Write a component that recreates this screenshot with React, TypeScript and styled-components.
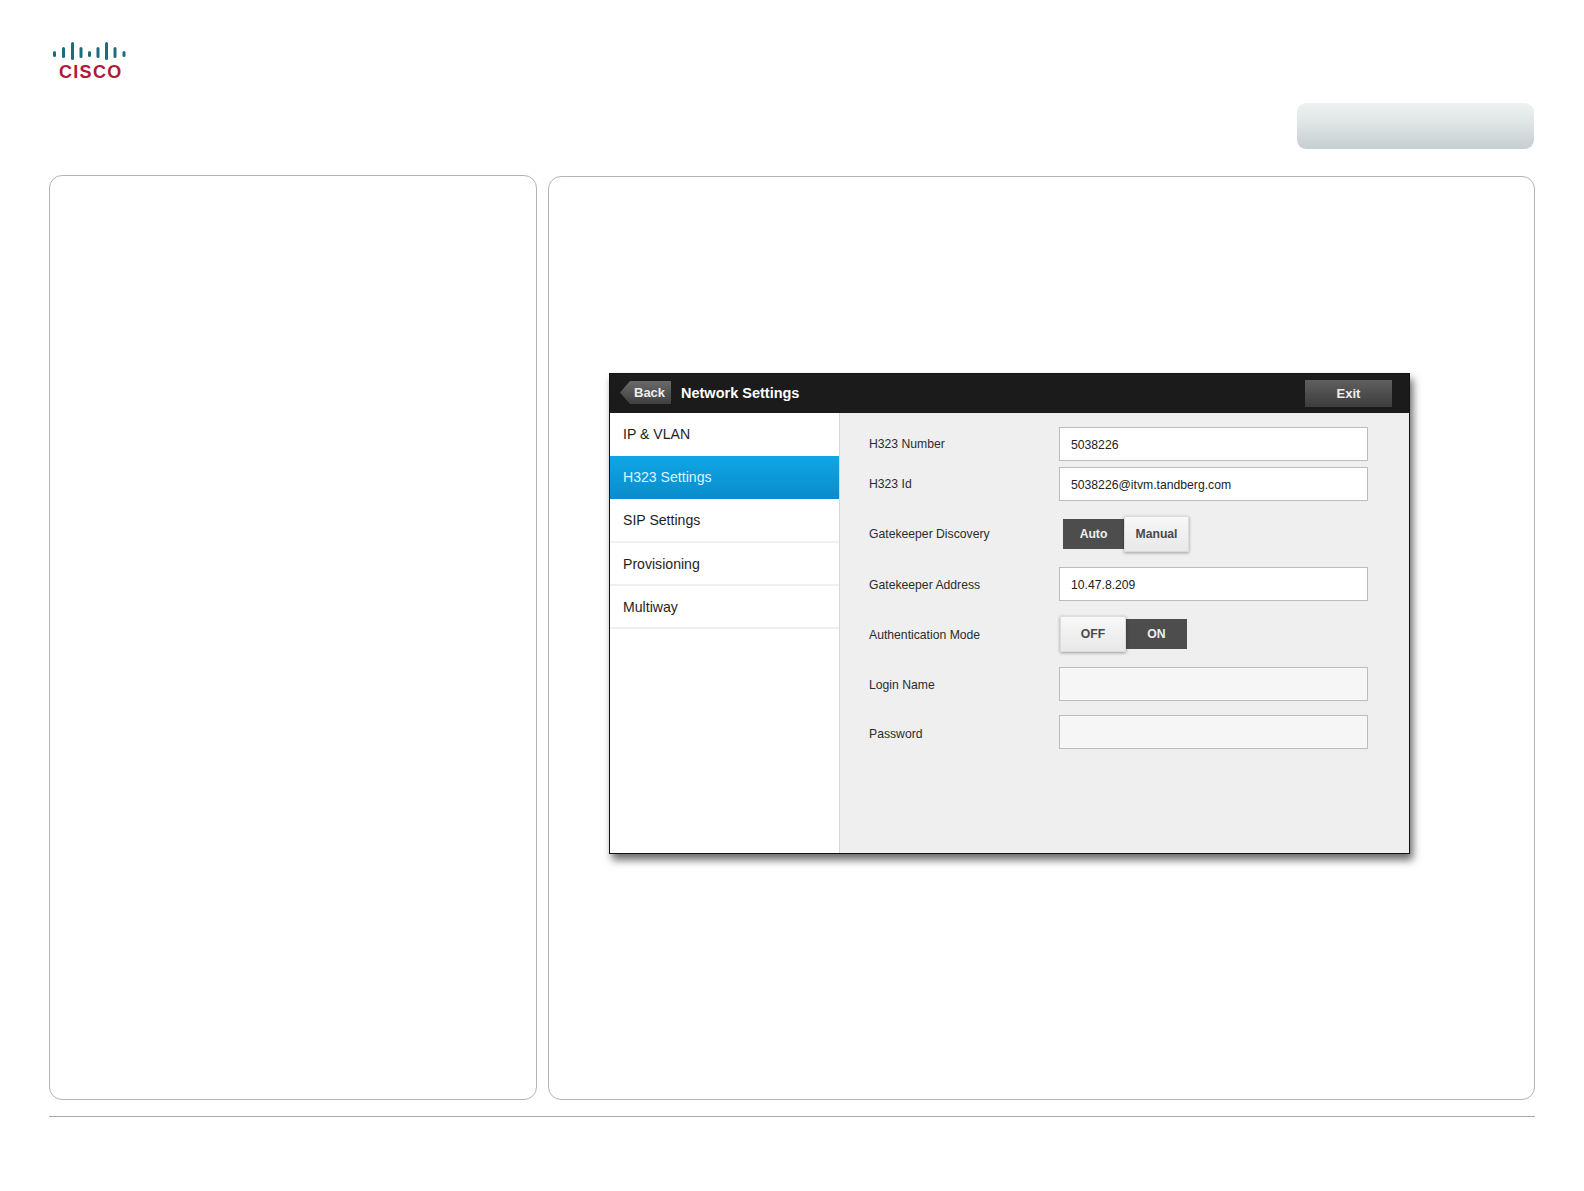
import React from "react";
import styled, { createGlobalStyle } from "styled-components";

const Global = createGlobalStyle`
  html, body { margin: 0; padding: 0; background: #fff; }
  body { font-family: "Liberation Sans", Arial, sans-serif; color: #222; }
`;

const Page = styled.div`
  width: 1584px;
  height: 1191px;
  box-sizing: border-box;
  padding: 0 49px;
  display: flex;
  flex-direction: column;
`;
const TopBar = styled.header`
  height: 175px;
  flex: none;
  display: flex;
  justify-content: space-between;
  align-items: flex-start;
`;
const LogoWrap = styled.div`
  width: 80px;
  margin: 41px 0 0 4px;
  display: flex;
  flex-direction: column;
  align-items: flex-start;
`;
const LogoTextRow = styled.div`
  display: flex;
  align-items: flex-end;
  margin: 4px 0 0 6px;
`;
const LogoText = styled.span`
  font-size: 18px;
  line-height: 14px;
  font-weight: 700;
  letter-spacing: 1.3px;
  color: #b2173c;
`;
const LogoMark = styled.span`
  font-size: 5px;
  line-height: 5px;
  color: #8a8a8a;
  margin-left: 1px;
`;
const TitlePill = styled.div`
  width: 237px;
  height: 46px;
  margin: 103px 1px 0 0;
  border-radius: 9px;
  background: linear-gradient(180deg, #eff2f3 0%, #dfe4e5 45%, #c5ced0 100%);
`;
const Panels = styled.div`
  display: flex;
  gap: 11px;
  height: 925px;
  flex: none;
`;
const Panel = styled.section<{ $w: number }>`
  width: ${(p) => p.$w}px;
  box-sizing: border-box;
  border: 1px solid #b4b4b4;
  border-radius: 13px;
  background: #fff;
  flex: none;
`;
const RightPanel = styled(Panel)`
  margin-top: 1px;
  padding: 196px 0 0 60px;
`;
const Rule = styled.hr`
  margin: 16px 0 0;
  border: 0;
  height: 1px;
  background: #a8a8a8;
`;

const Screen = styled.div`
  width: 801px;
  height: 481px;
  box-sizing: border-box;
  border: 1px solid #111;
  background: #fff;
  display: flex;
  flex-direction: column;
  box-shadow: 3px 6px 8px rgba(0, 0, 0, 0.58);
`;
const ScreenHeader = styled.div`
  height: 39px;
  flex: none;
  background: #1b1b1b;
  display: flex;
  align-items: center;
  padding: 0 17px 0 10px;
  color: #fff;
`;
const BackButton = styled.div`
  width: 51px;
  height: 23px;
  margin-top: -2px;
  box-sizing: border-box;
  padding-left: 14px;
  font-size: 13px;
  font-weight: 700;
  line-height: 24px;
  color: #eee;
  background: linear-gradient(180deg, #6a6a6a, #3f3f3f);
  clip-path: polygon(10px 0, 100% 0, 100% 100%, 10px 100%, 0 50%);
`;
const ScreenTitle = styled.div`
  margin: -2px 0 0 10px;
  font-size: 14.5px;
  font-weight: 700;
  flex: 1;
`;
const ExitButton = styled.div`
  width: 87px;
  height: 27px;
  margin-top: -1px;
  background: linear-gradient(180deg, #5f5f5f, #3d3d3d);
  font-size: 13px;
  font-weight: 700;
  line-height: 27px;
  text-align: center;
  color: #eee;
`;
const ScreenBody = styled.div`
  flex: 1;
  display: flex;
  min-height: 0;
`;
const Sidebar = styled.nav`
  width: 229px;
  flex: none;
  border-right: 1px solid #d8d8d8;
`;
const SideItem = styled.div<{ $active?: boolean; $divider?: boolean }>`
  height: 43px;
  box-sizing: border-box;
  padding-left: 13px;
  font-size: 14.1px;
  line-height: 43px;
  color: ${(p) => (p.$active ? "#dff3fd" : "#1e1e1e")};
  background: ${(p) => (p.$active ? "linear-gradient(180deg, #0fa6e6 0%, #0a8ccb 100%)" : "#fff")};
  border-bottom: ${(p) => (p.$divider ? "2px solid #f0f0f0" : "0")};
  &:nth-child(3) {
    height: 44px;
  }
`;
const Form = styled.div`
  flex: 1;
  background: #efefef;
  padding: 14px 0 0 29px;
`;
const Row = styled.div<{ $mt?: number }>`
  display: flex;
  align-items: center;
  height: 34px;
  margin-top: ${(p) => p.$mt ?? 0}px;
`;
const Label = styled.div<{ $pt?: number }>`
  width: 190px;
  flex: none;
  box-sizing: border-box;
  padding-top: ${(p) => p.$pt ?? 0}px;
  font-size: 12.2px;
  color: #2c2c2c;
`;
const Field = styled.div<{ $empty?: boolean }>`
  width: 309px;
  height: 34px;
  box-sizing: border-box;
  border: 1px solid #bcbcbc;
  background: ${(p) => (p.$empty ? "#f6f6f6" : "#fff")};
  padding-left: 11px;
  font-size: 12.2px;
  line-height: 34px;
  color: #222;
`;
const Toggle = styled.div<{ $pl: number }>`
  display: flex;
  align-items: center;
  padding-left: ${(p) => p.$pl}px;
`;
const ToggleOn = styled.div<{ $w: number }>`
  width: ${(p) => p.$w}px;
  height: 30px;
  background: #4d4d4d;
  color: #f0f0f0;
  font-size: 12.2px;
  font-weight: 700;
  line-height: 30px;
  text-align: center;
`;
const ToggleOff = styled.div<{ $w: number }>`
  width: ${(p) => p.$w}px;
  height: 36px;
  box-sizing: border-box;
  border: 1px solid #dcdcdc;
  background: linear-gradient(180deg, #f8f8f8, #e8e8e8);
  box-shadow: 0 1px 3px rgba(0, 0, 0, 0.35);
  color: #4a4a4a;
  font-size: 12.2px;
  font-weight: 700;
  line-height: 34px;
  text-align: center;
  position: relative;
  z-index: 1;
`;

/* x centre, top, bottom of each bar of the logo, in its own box */
const bars: [number, number, number][] = [
  [1.5, 10, 16], [10.5, 6, 17], [19.5, 1, 19], [28, 6, 17], [36.5, 10, 16],
  [45, 6, 17], [53.5, 1, 19], [62, 6, 17], [71, 10, 16],
];

const CiscoBars = () => (
  <svg width="74" height="20" viewBox="0 0 74 20" aria-hidden="true">
    {bars.map(([x, t, b]) => (
      <line key={x} x1={x} x2={x} y1={t + 1.5} y2={b - 1.5} stroke="#1c6b82" strokeWidth="3" strokeLinecap="round" />
    ))}
  </svg>
);

const sideItems = ["IP & VLAN", "H323 Settings", "SIP Settings", "Provisioning", "Multiway"];

export default function App() {
  return (
    <Page>
      <Global />
      <TopBar>
        <LogoWrap>
          <CiscoBars />
          <LogoTextRow>
            <LogoText>CISCO</LogoText>
            <LogoMark>.</LogoMark>
          </LogoTextRow>
        </LogoWrap>
        <TitlePill />
      </TopBar>
      <Panels>
        <Panel $w={488} />
        <RightPanel $w={987}>
          <Screen>
            <ScreenHeader>
              <BackButton>Back</BackButton>
              <ScreenTitle>Network Settings</ScreenTitle>
              <ExitButton>Exit</ExitButton>
            </ScreenHeader>
            <ScreenBody>
              <Sidebar>
                {sideItems.map((s, i) => (
                  <SideItem key={s} $active={i === 1} $divider={i >= 2}>
                    {s}
                  </SideItem>
                ))}
              </Sidebar>
              <Form>
                <Row>
                  <Label>H323 Number</Label>
                  <Field>5038226</Field>
                </Row>
                <Row $mt={6}>
                  <Label>H323 Id</Label>
                  <Field>5038226@itvm.tandberg.com</Field>
                </Row>
                <Row $mt={16}>
                  <Label>Gatekeeper Discovery</Label>
                  <Toggle $pl={4}>
                    <ToggleOn $w={61}>Auto</ToggleOn>
                    <ToggleOff $w={65}>Manual</ToggleOff>
                  </Toggle>
                </Row>
                <Row $mt={16}>
                  <Label $pt={1}>Gatekeeper Address</Label>
                  <Field>10.47.8.209</Field>
                </Row>
                <Row $mt={16}>
                  <Label $pt={2}>Authentication Mode</Label>
                  <Toggle $pl={1}>
                    <ToggleOff $w={66}>OFF</ToggleOff>
                    <ToggleOn $w={61}>ON</ToggleOn>
                  </Toggle>
                </Row>
                <Row $mt={16}>
                  <Label $pt={2}>Login Name</Label>
                  <Field $empty />
                </Row>
                <Row $mt={14}>
                  <Label $pt={3}>Password</Label>
                  <Field $empty />
                </Row>
              </Form>
            </ScreenBody>
          </Screen>
        </RightPanel>
      </Panels>
      <Rule />
    </Page>
  );
}
